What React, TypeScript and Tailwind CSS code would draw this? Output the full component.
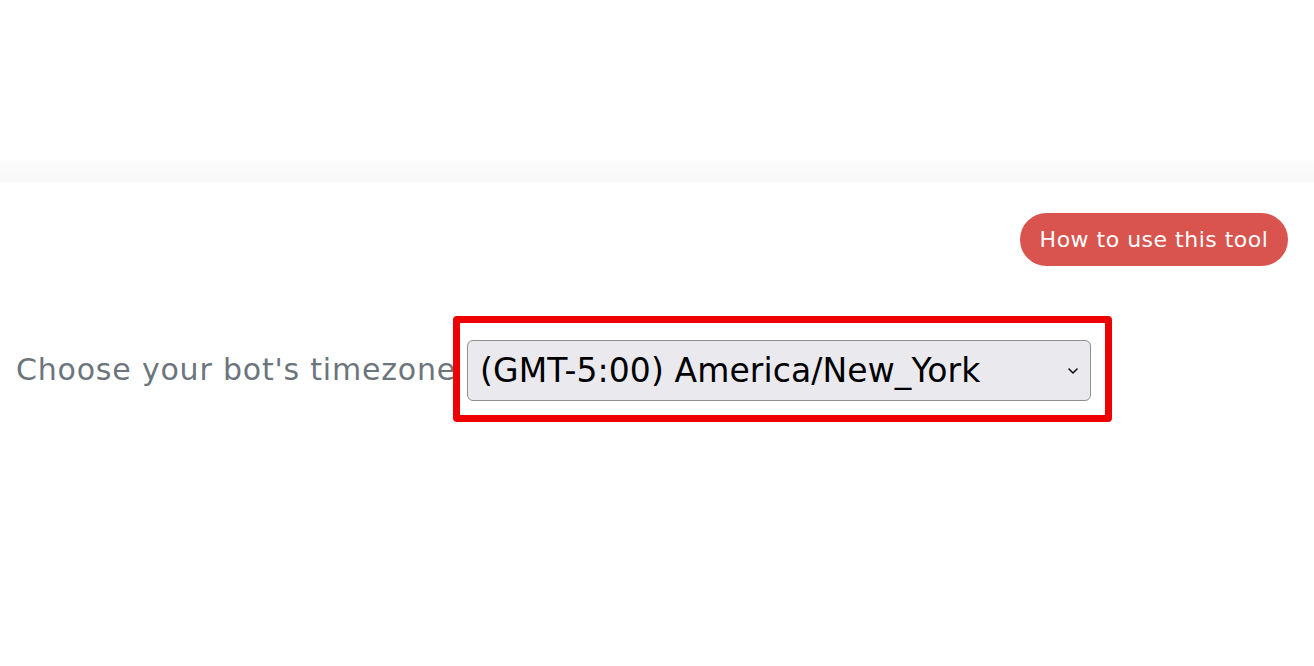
import React from "react";

const FONT = '"DejaVu Sans", "Open Sans", sans-serif';

export default function App() {
  return (
    <div className="min-h-[666px] w-full bg-white" style={{ fontFamily: FONT }}>
      <header className="h-[160px] bg-white" />
      <div className="h-[22px] bg-gradient-to-b from-[#fcfcfc] to-[#f8f8f8]" />
      <main className="pt-[31px]">
        <div className="flex justify-end pr-[26px]">
          <button className="h-[53px] w-[268px] rounded-full bg-[#d9534f] text-[22px] tracking-[0.5px] text-white">
            How to use this tool
          </button>
        </div>
        <div className="mt-[50px] flex items-center pl-[16px]">
          <label className="relative z-0 w-[437px] shrink-0 whitespace-nowrap text-[30px] tracking-[0.8px] text-[#6c757d]">
            Choose your bot's timezone
          </label>
          <div className="relative z-10 rounded-[4px] border-[7px] border-[#ee0000] bg-white pt-[17px] pb-[14px] pl-[7px] pr-[14px]">
            <div className="relative">
              <select
                defaultValue="America/New_York"
                className="h-[61px] w-[624px] appearance-none rounded-[6px] border-[1.5px] border-[#8e8e93] bg-[#e9e9ee] pl-[12px] text-[33px] tracking-[0.1px] text-black outline-none"
                style={{ fontFamily: FONT }}
              >
                <option value="America/New_York">(GMT-5:00) America/New_York</option>
              </select>
              <svg
                className="pointer-events-none absolute right-[12px] top-[27px]"
                width="12"
                height="8"
                viewBox="0 0 12 8"
                fill="none"
              >
                <path d="M2 2l4 4 4-4" stroke="#111" strokeWidth="1.6" strokeLinecap="round" strokeLinejoin="round" />
              </svg>
            </div>
          </div>
        </div>
      </main>
    </div>
  );
}
